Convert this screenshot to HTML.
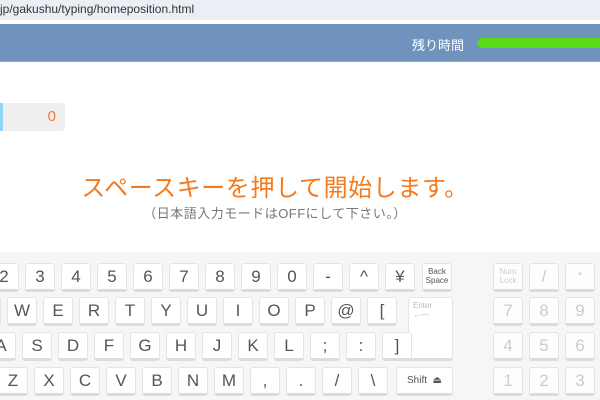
<!DOCTYPE html>
<html><head><meta charset="utf-8"><style>
*{margin:0;padding:0;box-sizing:border-box}
body{width:600px;height:400px;overflow:hidden;background:#fff;position:relative;font-family:"Liberation Sans","Noto Sans CJK JP",sans-serif}
.url{position:absolute;left:0;top:0;width:600px;height:20px;background:#eceef5;font-size:12px;color:#333;line-height:18px;padding-left:0}
.hdr{position:absolute;left:0;top:24px;width:600px;height:38px;background:#7093bd;border-bottom:1px solid #9aa;}
.hdr .t{position:absolute;left:412px;top:11px;color:#fff;font-size:13px}
.hdr .g{position:absolute;left:477px;top:14px;width:140px;height:10px;background:#5cd915;border-radius:5px}
.score{position:absolute;left:0;top:103px;width:65px;height:28px;background:#efefef;border-left:3px solid #8fd8f5;border-radius:0 3px 3px 0;color:#f07a30;font-size:15px;text-align:right;padding-right:9px;line-height:28px}
.title{position:absolute;left:0;width:550px;top:168px;text-align:center;color:#f57a1e;font-size:24px;letter-spacing:0.6px}
.sub{position:absolute;left:0;width:550px;top:203px;text-align:center;color:#777;font-size:13px;letter-spacing:0.5px}
.kb{position:absolute;left:0;top:252px;width:600px;height:148px;background:#f6f6f6}
.k{position:absolute;width:30px;height:29px;background:#fff;border:1px solid #e4e4e4;border-bottom:3px solid #dcdcdc;border-radius:3px;text-align:center;font-size:17px;color:#555;line-height:25px}
.n{color:#ccc;background:#fdfdfd}
.s{font-size:8px;line-height:9px;padding-top:3px}
</style></head><body>
<div class="url">jp/gakushu/typing/homeposition.html</div>
<div class="hdr"><span class="t">残り時間</span><div class="g"></div></div>
<div class="score">0</div>
<div class="title">スペースキーを押して開始します。</div>
<div class="sub">（日本語入力モードはOFFにして下さい。）</div>
<div class="kb"></div>
<div class="k" style="left:-11px;top:263px">2</div>
<div class="k" style="left:25px;top:263px">3</div>
<div class="k" style="left:61px;top:263px">4</div>
<div class="k" style="left:97px;top:263px">5</div>
<div class="k" style="left:133px;top:263px">6</div>
<div class="k" style="left:169px;top:263px">7</div>
<div class="k" style="left:205px;top:263px">8</div>
<div class="k" style="left:241px;top:263px">9</div>
<div class="k" style="left:277px;top:263px">0</div>
<div class="k" style="left:313px;top:263px">-</div>
<div class="k" style="left:349px;top:263px">^</div>
<div class="k" style="left:385px;top:263px">¥</div>
<div class="k s" style="left:422px;top:263px;font-size:8px">Back<br>Space</div>
<div class="k" style="left:-29px;top:297px">Q</div>
<div class="k" style="left:7px;top:297px">W</div>
<div class="k" style="left:43px;top:297px">E</div>
<div class="k" style="left:79px;top:297px">R</div>
<div class="k" style="left:115px;top:297px">T</div>
<div class="k" style="left:151px;top:297px">Y</div>
<div class="k" style="left:187px;top:297px">U</div>
<div class="k" style="left:223px;top:297px">I</div>
<div class="k" style="left:259px;top:297px">O</div>
<div class="k" style="left:295px;top:297px">P</div>
<div class="k" style="left:331px;top:297px">@</div>
<div class="k" style="left:367px;top:297px">[</div>
<div class="k s" style="left:408px;top:297px;width:45px;height:64px;color:#bbb;text-align:left;padding-left:4px">Enter<br>←—</div>
<div class="k" style="left:-14px;top:332px">A</div>
<div class="k" style="left:22px;top:332px">S</div>
<div class="k" style="left:58px;top:332px">D</div>
<div class="k" style="left:94px;top:332px">F</div>
<div class="k" style="left:130px;top:332px">G</div>
<div class="k" style="left:166px;top:332px">H</div>
<div class="k" style="left:202px;top:332px">J</div>
<div class="k" style="left:238px;top:332px">K</div>
<div class="k" style="left:274px;top:332px">L</div>
<div class="k" style="left:310px;top:332px">;</div>
<div class="k" style="left:346px;top:332px">:</div>
<div class="k" style="left:382px;top:332px">]</div>
<div class="k" style="left:-2px;top:367px">Z</div>
<div class="k" style="left:34px;top:367px">X</div>
<div class="k" style="left:70px;top:367px">C</div>
<div class="k" style="left:106px;top:367px">V</div>
<div class="k" style="left:142px;top:367px">B</div>
<div class="k" style="left:178px;top:367px">N</div>
<div class="k" style="left:214px;top:367px">M</div>
<div class="k" style="left:250px;top:367px">,</div>
<div class="k" style="left:286px;top:367px">.</div>
<div class="k" style="left:322px;top:367px">/</div>
<div class="k" style="left:358px;top:367px">\</div>
<div class="k" style="left:396px;top:367px;width:57px;font-size:10px">Shift &nbsp;⏏</div>
<div class="k n s" style="left:493px;top:263px">Num<br>Lock</div>
<div class="k n" style="left:529px;top:263px">/</div>
<div class="k n" style="left:565px;top:263px;font-size:11px">*</div>
<div class="k n" style="left:493px;top:297px">7</div>
<div class="k n" style="left:529px;top:297px">8</div>
<div class="k n" style="left:565px;top:297px">9</div>
<div class="k n" style="left:493px;top:332px">4</div>
<div class="k n" style="left:529px;top:332px">5</div>
<div class="k n" style="left:565px;top:332px">6</div>
<div class="k n" style="left:493px;top:367px">1</div>
<div class="k n" style="left:529px;top:367px">2</div>
<div class="k n" style="left:565px;top:367px">3</div>
</body></html>
